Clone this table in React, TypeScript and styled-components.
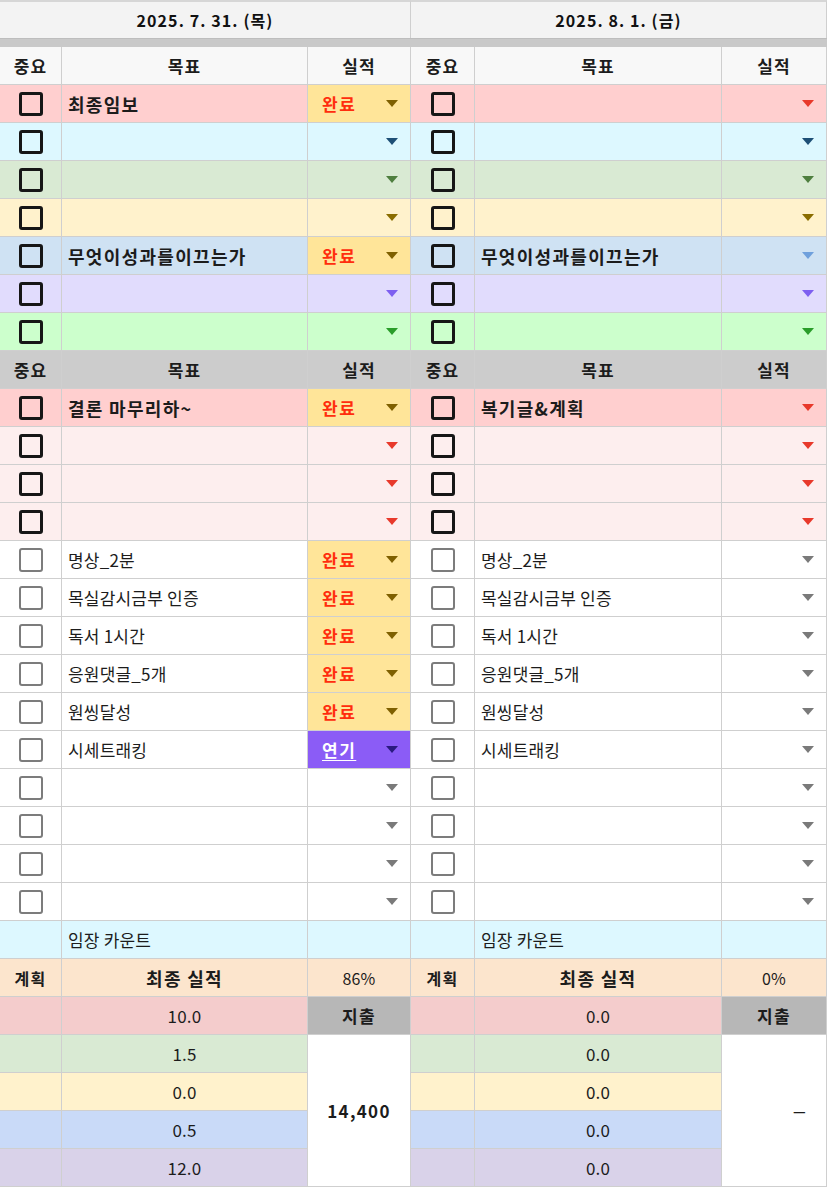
import React from 'react';
import styled, { createGlobalStyle } from 'styled-components';

const GlobalStyle = createGlobalStyle`
  html, body { margin: 0; padding: 0; background: #ffffff; }
  body { font-family: "Noto Sans CJK KR", "Noto Sans", sans-serif; color: #1f1f1f; }
  * { box-sizing: border-box; }
`;

const LINE = '#cfcfcf';

const Sheet = styled.div`
  display: flex;
  width: 827px;
`;

const Panel = styled.div<{ $cols: string }>`
  display: grid;
  grid-template-columns: ${p => p.$cols};
  grid-template-rows: 38px 9px;
  grid-auto-rows: 38px;
`;

const DateCell = styled.div`
  grid-column: 1 / -1;
  display: flex;
  align-items: center;
  justify-content: center;
  background: #f3f3f3;
  border-top: 2px solid #d6d6d6;
  border-right: 1px solid ${LINE};
  font-size: 16px;
  font-weight: 600;
  letter-spacing: 1.1px;
  color: #111;
`;

const Band = styled.div`
  grid-column: 1 / -1;
  background: #c9c9c9;
  border-top: 1px solid #bdbdbd;
`;

type Align = 'left' | 'center' | 'right';

const justify = (a?: Align) => (a === 'left' ? 'flex-start' : a === 'right' ? 'flex-end' : 'center');

const Cell = styled.div<{ $bg?: string; $align?: Align; $bold?: boolean; $size?: number; $span?: number }>`
  display: flex;
  align-items: center;
  justify-content: ${p => justify(p.$align)};
  padding: ${p => (p.$align === 'right' ? '0 19px 0 6px' : '0 6px')};
  background: ${p => p.$bg ?? '#ffffff'};
  border-right: 1px solid ${LINE};
  border-bottom: 1px solid ${LINE};
  font-size: ${p => p.$size ?? 17}px;
  font-weight: ${p => (p.$bold ? 700 : 400)};
  letter-spacing: ${p => (p.$bold ? '1.3px' : '0.2px')};
  color: #1c1c1c;
  white-space: nowrap;
  overflow: hidden;
  ${p => (p.$span ? `grid-row: span ${p.$span};` : '')}
`;

const HeadCell = styled(Cell)`
  font-weight: 700;
  font-size: 17px;
  letter-spacing: 1px;
`;

const StatusCell = styled.div<{ $bg: string; $fg: string; $underline?: boolean }>`
  display: flex;
  align-items: center;
  justify-content: space-between;
  padding: 0 12px 0 14px;
  background: ${p => p.$bg};
  border-right: 1px solid ${LINE};
  border-bottom: 1px solid ${LINE};
  color: ${p => p.$fg};
  font-size: 17px;
  font-weight: 700;
  letter-spacing: 1.5px;
  text-decoration: ${p => (p.$underline ? 'underline' : 'none')};
  text-underline-offset: 3px;
`;

const Arrow = styled.span<{ $color: string }>`
  margin-left: auto;
  width: 0;
  height: 0;
  border-left: 6px solid transparent;
  border-right: 6px solid transparent;
  border-top: 7px solid ${p => p.$color};
`;

const Check = styled.span<{ $strong?: boolean }>`
  width: 24px;
  height: 24px;
  border-radius: 3px;
  border: ${p => (p.$strong ? '3px solid #161616' : '2px solid #7c7c7c')};
`;

type Status = '완료' | '연기' | undefined;

interface Row {
  bg: string;
  arrow: string;
  strong: boolean;
  text?: string;
  bold?: boolean;
  status?: Status;
}

const PINK = '#ffcfcf';
const PALE_PINK = '#fdeeee';

const baseA = [
  { bg: PINK, arrow: '#e8392b' },
  { bg: '#ddf8ff', arrow: '#1d4f76' },
  { bg: '#d9ead3', arrow: '#4f7f3f' },
  { bg: '#fff2cc', arrow: '#8a6d00' },
  { bg: '#cfe2f3', arrow: '#6fa0dc' },
  { bg: '#e1dcfd', arrow: '#7d5ff0' },
  { bg: '#ccffcc', arrow: '#2a9d2a' },
];

const baseB = [
  { bg: PINK, arrow: '#e8392b' },
  { bg: PALE_PINK, arrow: '#e8392b' },
  { bg: PALE_PINK, arrow: '#e8392b' },
  { bg: PALE_PINK, arrow: '#e8392b' },
];

const tasks = ['명상_2분', '목실감시금부 인증', '독서 1시간', '응원댓글_5개', '원씽달성', '시세트래킹', '', '', '', ''];

function build(
  textsA: (string | undefined)[],
  statusA: Status[],
  textsB: (string | undefined)[],
  statusB: Status[],
  taskStatus: Status[],
) {
  const a: Row[] = baseA.map((b, i) => ({ ...b, strong: true, text: textsA[i], bold: true, status: statusA[i] }));
  const b: Row[] = baseB.map((r, i) => ({ ...r, strong: true, text: textsB[i], bold: true, status: statusB[i] }));
  const t: Row[] = tasks.map((txt, i) => ({ bg: '#ffffff', arrow: '#7a7a7a', strong: false, text: txt, status: taskStatus[i] }));
  return { a, b, t };
}

const SUMMARY_COLORS = ['#f4cccc', '#d9ead3', '#fff2cc', '#c9daf8', '#d9d2e9'];

interface DayData {
  date: string;
  cols: string;
  a: Row[];
  b: Row[];
  t: Row[];
  percent: string;
  values: string[];
  spend: string;
  spendAlign: Align;
  spendSize: number;
}

const left = build(
  ['최종임보', '', '', '', '무엇이성과를이끄는가', '', ''],
  ['완료', undefined, undefined, undefined, '완료', undefined, undefined],
  ['결론 마무리하~', '', '', ''],
  ['완료', undefined, undefined, undefined],
  ['완료', '완료', '완료', '완료', '완료', '연기'],
);

const right = build(
  ['', '', '', '', '무엇이성과를이끄는가', '', ''],
  [],
  ['복기글&계획', '', '', ''],
  [],
  [],
);

const days: DayData[] = [
  {
    date: '2025. 7. 31. (목)',
    cols: '62px 246px 103px',
    ...left,
    percent: '86%',
    values: ['10.0', '1.5', '0.0', '0.5', '12.0'],
    spend: '14,400',
    spendAlign: 'center',
    spendSize: 17,
  },
  {
    date: '2025. 8. 1. (금)',
    cols: '64px 247px 105px',
    ...right,
    percent: '0%',
    values: ['0.0', '0.0', '0.0', '0.0', '0.0'],
    spend: '—',
    spendAlign: 'right',
    spendSize: 14,
  },
];

function StatusBox({ row }: { row: Row }) {
  if (row.status === '완료') {
    return (
      <StatusCell $bg="#ffe599" $fg="#ff2d0d">
        완료
        <Arrow $color="#7f6000" />
      </StatusCell>
    );
  }
  if (row.status === '연기') {
    return (
      <StatusCell $bg="#8b5cf6" $fg="#ffffff" $underline>
        연기
        <Arrow $color="#2b1a80" />
      </StatusCell>
    );
  }
  return (
    <StatusCell $bg={row.bg} $fg="#000">
      <Arrow $color={row.arrow} />
    </StatusCell>
  );
}

function GoalRow({ row }: { row: Row }) {
  return (
    <>
      <Cell $bg={row.bg}>
        <Check $strong={row.strong} />
      </Cell>
      <Cell $bg={row.bg} $align="left" $bold={row.bold} $size={row.bold ? 18 : 17}>
        {row.text}
      </Cell>
      <StatusBox row={row} />
    </>
  );
}

function Header({ bg }: { bg: string }) {
  return (
    <>
      <HeadCell $bg={bg}>중요</HeadCell>
      <HeadCell $bg={bg}>목표</HeadCell>
      <HeadCell $bg={bg}>실적</HeadCell>
    </>
  );
}

function Day({ d }: { d: DayData }) {
  return (
    <Panel $cols={d.cols}>
      <DateCell>{d.date}</DateCell>
      <Band />
      <Header bg="#f8f8f8" />
      {d.a.map((r, i) => (
        <GoalRow key={`a${i}`} row={r} />
      ))}
      <Header bg="#cccccc" />
      {d.b.map((r, i) => (
        <GoalRow key={`b${i}`} row={r} />
      ))}
      {d.t.map((r, i) => (
        <GoalRow key={`t${i}`} row={r} />
      ))}
      <Cell $bg="#ddf8ff" />
      <Cell $bg="#ddf8ff" $align="left">임장 카운트</Cell>
      <Cell $bg="#ddf8ff" />
      <Cell $bg="#fce5cd" $bold $size={16}>계획</Cell>
      <Cell $bg="#fce5cd" $bold $size={18}>최종 실적</Cell>
      <Cell $bg="#fce5cd" $size={16}>{d.percent}</Cell>
      {d.values.map((v, i) => (
        <React.Fragment key={`v${i}`}>
          <Cell $bg={SUMMARY_COLORS[i]} />
          <Cell $bg={SUMMARY_COLORS[i]} $size={17}>{v}</Cell>
          {i === 0 && (
            <Cell $bg="#b7b7b7" $bold>
              지출
            </Cell>
          )}
          {i === 1 && (
            <Cell $bg="#ffffff" $bold $span={4} $align={d.spendAlign} $size={d.spendSize}>
              {d.spend}
            </Cell>
          )}
        </React.Fragment>
      ))}
    </Panel>
  );
}

export default function App() {
  return (
    <>
      <GlobalStyle />
      <Sheet>
        {days.map(d => (
          <Day key={d.date} d={d} />
        ))}
      </Sheet>
    </>
  );
}
